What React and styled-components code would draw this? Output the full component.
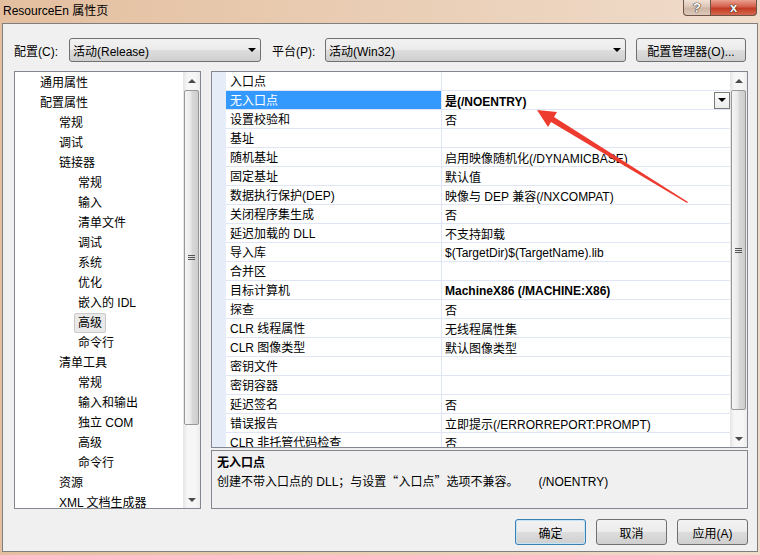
import React from 'react';
import styled, { createGlobalStyle, css } from 'styled-components';

const GlobalStyle = createGlobalStyle`
  html, body {
    margin: 0;
    padding: 0;
  }
  body {
    font-family: "Liberation Sans", "Noto Sans CJK SC", sans-serif;
    font-size: 12px;
    color: #000;
    background: #fff;
  }
`;

const Window = styled.div`
  position: relative;
  width: 760px;
  height: 555px;
  box-sizing: border-box;
  padding: 0 2px 3px 2px;
  display: flex;
  flex-direction: column;
  background: linear-gradient(to right, #e4bf9f 0%, #eacfb7 55%, #f0dccb 100%);
`;

const TitleBar = styled.div`
  height: 23px;
  flex-shrink: 0;
  display: flex;
  align-items: flex-start;
  justify-content: space-between;
`;

const Title = styled.div`
  padding: 4px 0 0 1px;
  line-height: 15px;
`;

const Caption = styled.div`
  display: flex;
  margin-right: 1px;
`;

const CaptionButton = styled.div`
  height: 16px;
  box-sizing: border-box;
  display: flex;
  align-items: center;
  justify-content: center;
  color: #fff;
  font-weight: bold;
  font-size: 13px;
  border: 1px solid #6e5448;
  border-top: none;
  text-shadow: 0 0 1px #3a2a22, 0 0 1px #3a2a22, 0 0 1px #3a2a22;
  ${(p) =>
    p.$close
      ? css`
          width: 47px;
          border-radius: 0 0 4px 0;
          background: linear-gradient(#e9a08f, #d4604c 45%, #c23a24 55%, #d46a50);
        `
      : css`
          width: 27px;
          border-right: none;
          border-radius: 0 0 0 4px;
          background: linear-gradient(#f1e1d5, #dcc6b6 45%, #cfb5a3 55%, #dcc8ba);
        `}
`;

const Client = styled.div`
  flex: 1;
  display: flex;
  flex-direction: column;
  background: #f0f0f0;
  border: 1px solid #7f7f7f;
  padding: 14px 9px 6px 11px;
`;

const TopBar = styled.div`
  display: flex;
  align-items: center;
  height: 24px;
`;

const FieldLabel = styled.label`
  width: ${(p) => p.$w}px;
  margin-left: ${(p) => p.$gap || 0}px;
  flex-shrink: 0;
`;

const winGradient = css`
  background: linear-gradient(#f2f2f2 0%, #ebebeb 50%, #dddddd 51%, #cfcfcf 100%);
`;

const Combo = styled.div`
  width: ${(p) => p.$w}px;
  height: 24px;
  box-sizing: border-box;
  border: 1px solid #707070;
  border-radius: 3px;
  ${winGradient};
  display: flex;
  align-items: center;
  padding: 0 4px 0 3px;
`;

const ComboText = styled.span`
  flex: 1;
`;

const DownTriangle = styled.span`
  width: 0;
  height: 0;
  border-left: 4px solid transparent;
  border-right: 4px solid transparent;
  border-top: 4px solid #000;
`;

const PushButton = styled.div`
  width: ${(p) => p.$w}px;
  height: ${(p) => p.$h || 24}px;
  margin-left: ${(p) => p.$gap || 0}px;
  box-sizing: border-box;
  border: 1px solid ${(p) => (p.$default ? '#3c7fb1' : '#707070')};
  border-radius: 3px;
  ${winGradient};
  display: flex;
  align-items: center;
  justify-content: center;
  ${(p) =>
    p.$default &&
    css`
      box-shadow: inset 0 0 0 1px #c4e5f6;
    `}
`;

const Main = styled.div`
  display: flex;
  gap: 10px;
  margin-top: 9px;
  height: 438px;
`;

const TreePanel = styled.div`
  width: 187px;
  box-sizing: border-box;
  border: 1px solid #828790;
  background: #fff;
  display: flex;
`;

const TreeList = styled.ul`
  flex: 1;
  margin: 0;
  padding: 1px 0 0;
  list-style: none;
  overflow: hidden;
`;

const TreeItem = styled.li`
  height: 20px;
  display: flex;
  align-items: center;
  padding-left: ${(p) => 21 + p.$level * 19}px;
  white-space: nowrap;
`;

const TreeLabel = styled.span`
  height: 20px;
  line-height: 19px;
  box-sizing: border-box;
  padding: 0 3px;
  border: 1px solid transparent;
  border-radius: 2px;
  ${(p) =>
    p.$selected &&
    css`
      background: #e9e9e9;
      border-color: #c9c9c9;
    `}
`;

const ScrollBar = styled.div`
  width: 17px;
  flex-shrink: 0;
  display: flex;
  flex-direction: column;
  background: linear-gradient(to right, #e4e4e4, #f6f6f6 25%, #f6f6f6 75%, #ececec);
`;

const ScrollArrow = styled.div`
  height: 17px;
  flex-shrink: 0;
  display: flex;
  align-items: center;
  justify-content: center;
`;

const ArrowGlyph = styled.span`
  width: 0;
  height: 0;
  border-left: 4px solid transparent;
  border-right: 4px solid transparent;
  ${(p) => (p.$up ? 'border-bottom: 4px solid #4a4a4a;' : 'border-top: 4px solid #4a4a4a;')}
`;

const ScrollTrack = styled.div`
  flex: 1;
  padding-top: ${(p) => p.$offset}px;
`;

const ScrollThumb = styled.div`
  height: ${(p) => p.$size}px;
  margin: 0 1px;
  box-sizing: border-box;
  border: 1px solid #979797;
  border-radius: 2px;
  background: linear-gradient(to right, #f6f6f6, #e8e8e8 45%, #d8d8d8 55%, #cdcdcd);
  display: flex;
  align-items: center;
  justify-content: center;
`;

const Grip = styled.span`
  width: 7px;
  height: 5px;
  background: repeating-linear-gradient(to bottom, #555 0 1px, transparent 1px 2px);
`;

const RightPane = styled.div`
  flex: 1;
  display: flex;
  flex-direction: column;
  gap: 2px;
`;

const PropGrid = styled.div`
  height: 377px;
  flex-shrink: 0;
  box-sizing: border-box;
  border: 1px solid #828790;
  background: #fff;
  display: flex;
`;

const Gutter = styled.div`
  width: 14px;
  flex-shrink: 0;
  background: #e7ecf9;
`;

const Rows = styled.div`
  flex: 1;
  overflow: hidden;
`;

const Row = styled.div`
  display: flex;
  height: 19px;
  box-sizing: border-box;
  border-bottom: 1px solid #dfe5f5;
  white-space: nowrap;
`;

const NameCell = styled.div`
  width: 216px;
  flex-shrink: 0;
  box-sizing: border-box;
  border-right: 1px solid #dfe5f5;
  padding: 1px 0 0 4px;
  line-height: 18px;
  ${(p) =>
    p.$selected &&
    css`
      background: #3399ff;
      color: #fff;
    `}
`;

const ValueCell = styled.div`
  flex: 1;
  display: flex;
  align-items: center;
  padding: 1px 0 0 3px;
  font-weight: ${(p) => (p.$bold ? 'bold' : 'normal')};
`;

const ValueText = styled.span`
  flex: 1;
`;

const CellDrop = styled.div`
  width: 16px;
  height: 17px;
  margin-top: -1px;
  box-sizing: border-box;
  border: 1px solid #7a7a7a;
  background: linear-gradient(#fbfbfb, #ececec);
  display: flex;
  align-items: center;
  justify-content: center;
`;

const DescBox = styled.div`
  flex: 1;
  box-sizing: border-box;
  border: 1px solid #828790;
  padding: 3px 5px 2px;
  line-height: 18px;
  white-space: nowrap;
`;

const DescTitle = styled.div`
  font-weight: bold;
`;

const CjkQuote = styled.span`
  font-family: "Noto Sans CJK SC", sans-serif;
`;

const Switch = styled.span`
  margin-left: 20px;
`;

const Footer = styled.div`
  display: flex;
  justify-content: flex-end;
  gap: 10px;
  margin-top: 10px;
`;

const Annotation = styled.svg`
  position: absolute;
  left: 0;
  top: 0;
  pointer-events: none;
`;

const treeItems = [
  ['通用属性', 0],
  ['配置属性', 0],
  ['常规', 1],
  ['调试', 1],
  ['链接器', 1],
  ['常规', 2],
  ['输入', 2],
  ['清单文件', 2],
  ['调试', 2],
  ['系统', 2],
  ['优化', 2],
  ['嵌入的 IDL', 2],
  ['高级', 2, true],
  ['命令行', 2],
  ['清单工具', 1],
  ['常规', 2],
  ['输入和输出', 2],
  ['独立 COM', 2],
  ['高级', 2],
  ['命令行', 2],
  ['资源', 1],
  ['XML 文档生成器', 1],
];

const props = [
  { name: '入口点', value: '' },
  { name: '无入口点', value: '是(/NOENTRY)', bold: true, selected: true },
  { name: '设置校验和', value: '否' },
  { name: '基址', value: '' },
  { name: '随机基址', value: '启用映像随机化(/DYNAMICBASE)' },
  { name: '固定基址', value: '默认值' },
  { name: '数据执行保护(DEP)', value: '映像与 DEP 兼容(/NXCOMPAT)' },
  { name: '关闭程序集生成', value: '否' },
  { name: '延迟加载的 DLL', value: '不支持卸载' },
  { name: '导入库', value: '$(TargetDir)$(TargetName).lib' },
  { name: '合并区', value: '' },
  { name: '目标计算机', value: 'MachineX86 (/MACHINE:X86)', bold: true },
  { name: '探查', value: '否' },
  { name: 'CLR 线程属性', value: '无线程属性集' },
  { name: 'CLR 图像类型', value: '默认图像类型' },
  { name: '密钥文件', value: '' },
  { name: '密钥容器', value: '' },
  { name: '延迟签名', value: '否' },
  { name: '错误报告', value: '立即提示(/ERRORREPORT:PROMPT)' },
  { name: 'CLR 非托管代码检查', value: '否' },
];

const VScroll = ({ offset, size }) => (
  <ScrollBar>
    <ScrollArrow>
      <ArrowGlyph $up />
    </ScrollArrow>
    <ScrollTrack $offset={offset}>
      <ScrollThumb $size={size}>
        <Grip />
      </ScrollThumb>
    </ScrollTrack>
    <ScrollArrow>
      <ArrowGlyph />
    </ScrollArrow>
  </ScrollBar>
);

const App = () => {
  return (
    <Window>
      <GlobalStyle />
      <TitleBar>
        <Title>ResourceEn 属性页</Title>
        <Caption>
          <CaptionButton>?</CaptionButton>
          <CaptionButton $close>x</CaptionButton>
        </Caption>
      </TitleBar>
      <Client>
        <TopBar>
          <FieldLabel $w={55}>配置(C):</FieldLabel>
          <Combo $w={192}>
            <ComboText>活动(Release)</ComboText>
            <DownTriangle />
          </Combo>
          <FieldLabel $w={53} $gap={11}>
            平台(P):
          </FieldLabel>
          <Combo $w={301}>
            <ComboText>活动(Win32)</ComboText>
            <DownTriangle />
          </Combo>
          <PushButton $w={110} $gap={10}>
            配置管理器(O)...
          </PushButton>
        </TopBar>

        <Main>
          <TreePanel>
            <TreeList>
              {treeItems.map(([label, level, selected], i) => (
                <TreeItem key={i} $level={level}>
                  <TreeLabel $selected={selected}>{label}</TreeLabel>
                </TreeItem>
              ))}
            </TreeList>
            <VScroll offset={1} size={335} />
          </TreePanel>

          <RightPane>
            <PropGrid>
              <Gutter />
              <Rows>
                {props.map((p, i) => (
                  <Row key={i}>
                    <NameCell $selected={p.selected}>{p.name}</NameCell>
                    <ValueCell $bold={p.bold}>
                      <ValueText>{p.value}</ValueText>
                      {p.selected && (
                        <CellDrop>
                          <DownTriangle />
                        </CellDrop>
                      )}
                    </ValueCell>
                  </Row>
                ))}
              </Rows>
              <VScroll offset={1} size={320} />
            </PropGrid>
            <DescBox>
              <DescTitle>无入口点</DescTitle>
              <div>
                创建不带入口点的 DLL；与设置<CjkQuote>“</CjkQuote>入口点
                <CjkQuote>”</CjkQuote>选项不兼容。
                <Switch>(/NOENTRY)</Switch>
              </div>
            </DescBox>
          </RightPane>
        </Main>

        <Footer>
          <PushButton $w={71} $h={26} $default>
            确定
          </PushButton>
          <PushButton $w={71} $h={26}>
            取消
          </PushButton>
          <PushButton $w={71} $h={26}>
            应用(A)
          </PushButton>
        </Footer>
      </Client>

      <Annotation width="760" height="555" viewBox="0 0 760 555">
        <polygon
          points="537,110 557,112 554,117 688,202 687,203 551,122 548,127"
          fill="#ee3b2f"
        />
      </Annotation>
    </Window>
  );
};

export default App;
